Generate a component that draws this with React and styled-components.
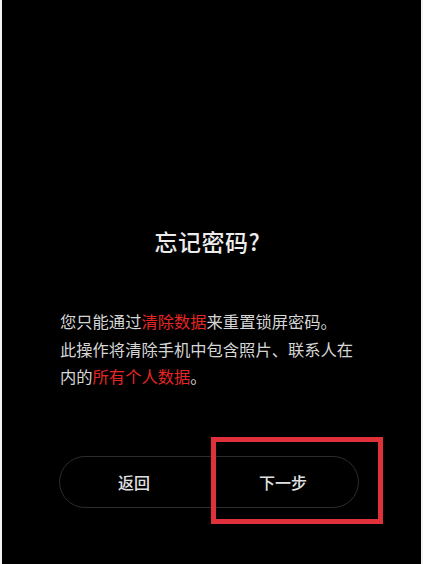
import styled, { createGlobalStyle } from "styled-components";

const GlobalStyle = createGlobalStyle`
  html, body {
    margin: 0;
    padding: 0;
    background: #f4f4f4;
  }
  * {
    box-sizing: border-box;
  }
`;

const Screen = styled.div`
  margin: 0 2px;
  height: 564px;
  background: #000;
  display: flex;
  flex-direction: column;
  align-items: center;
  font-family: "Noto Sans CJK SC", "Noto Sans", sans-serif;
  color: #dcdcdc;
`;

const Title = styled.h1`
  margin: 224px 8px 0 0;
  font-size: 23px;
  font-weight: 500;
  line-height: 34px;
  color: #ececec;
  letter-spacing: 0.5px;
`;

const Message = styled.p`
  align-self: stretch;
  margin: 50px 0 0 0;
  padding-left: 58px;
  font-size: 16.3px;
  line-height: 27.5px;
  color: #d6d6d6;
`;

const Danger = styled.span`
  color: #e52626;
`;

const ButtonGroup = styled.div`
  position: relative;
  margin: 65px 6px 0 0;
  width: 300px;
  height: 52px;
  border: 1.5px solid #2c2c2c;
  border-radius: 26px;
  display: flex;
`;

const Button = styled.button`
  flex: 1;
  background: transparent;
  border: none;
  color: #e0e0e0;
  font-family: inherit;
  font-size: 16px;
  font-weight: 500;
  cursor: pointer;
`;

const Highlight = styled.div`
  position: absolute;
  left: 151px;
  top: -20px;
  width: 172px;
  height: 87px;
  border: 5px solid #e0313a;
  pointer-events: none;
`;

export default function App() {
  return (
    <>
      <GlobalStyle />
      <Screen>
        <Title>忘记密码?</Title>
        <Message>
          您只能通过<Danger>清除数据</Danger>来重置锁屏密码。
          <br />
          此操作将清除手机中包含照片、联系人在
          <br />
          内的<Danger>所有个人数据</Danger>。
        </Message>
        <ButtonGroup>
          <Button>返回</Button>
          <Button>下一步</Button>
          <Highlight />
        </ButtonGroup>
      </Screen>
    </>
  );
}
